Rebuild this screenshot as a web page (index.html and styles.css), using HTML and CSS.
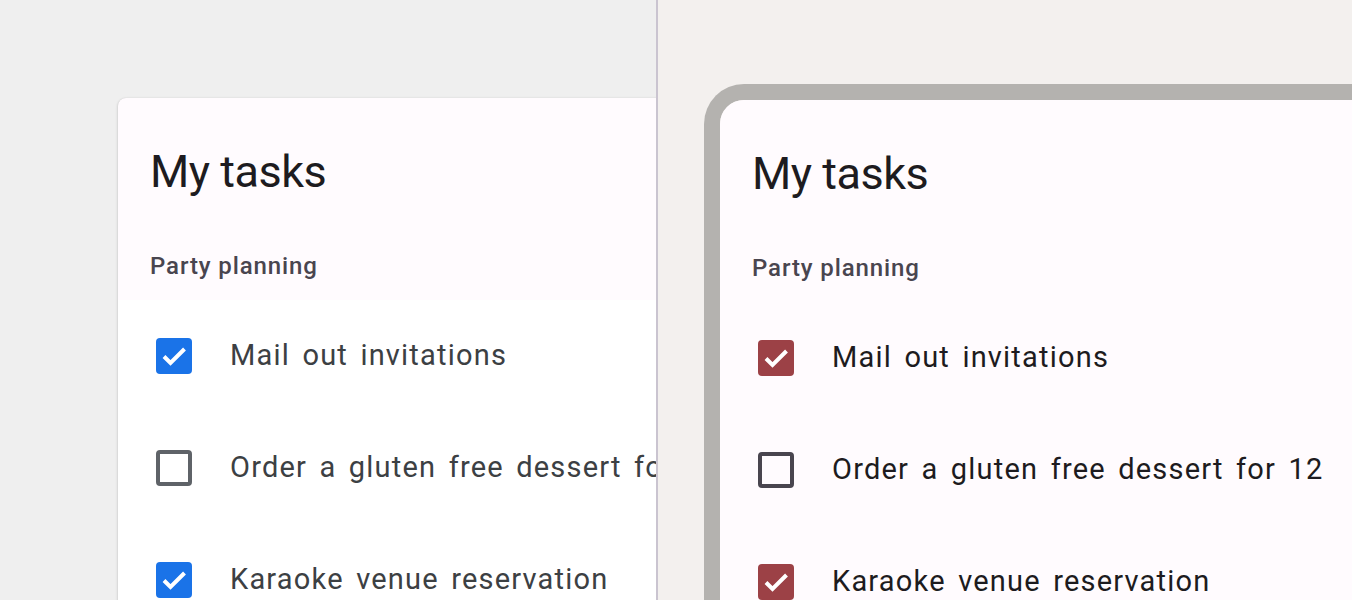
FILE: index.html
```html
<!DOCTYPE html>
<html>
<head>
<meta charset="utf-8">
<link rel="stylesheet" href="styles.css">
</head>
<body>
<div class="stage">
  <section class="pane pane-left">
    <div class="card card-a">
      <header class="card-head">
        <h1 class="title">My tasks</h1>
        <div class="subtitle">Party planning</div>
      </header>
      <ul class="list list-a">
        <li class="row"><span class="box checked"><svg viewBox="0 0 36 36"><polyline points="8,18.5 14.5,25 28.5,11" /></svg></span><span class="label">Mail out invitations</span></li>
        <li class="row"><span class="box"></span><span class="label">Order a gluten free dessert for 12</span></li>
        <li class="row"><span class="box checked"><svg viewBox="0 0 36 36"><polyline points="8,18.5 14.5,25 28.5,11" /></svg></span><span class="label">Karaoke venue reservation</span></li>
      </ul>
    </div>
  </section>
  <div class="divider"></div>
  <section class="pane pane-right">
    <div class="frame">
      <div class="card card-b">
        <header class="card-head">
          <h1 class="title">My tasks</h1>
          <div class="subtitle">Party planning</div>
        </header>
        <ul class="list list-b">
          <li class="row"><span class="box checked"><svg viewBox="0 0 36 36"><polyline points="8,18.5 14.5,25 28.5,11" /></svg></span><span class="label">Mail out invitations</span></li>
          <li class="row"><span class="box"></span><span class="label">Order a gluten free dessert for 12</span></li>
          <li class="row"><span class="box checked"><svg viewBox="0 0 36 36"><polyline points="8,18.5 14.5,25 28.5,11" /></svg></span><span class="label">Karaoke venue reservation</span></li>
        </ul>
      </div>
    </div>
  </section>
</div>
</body>
</html>
```

FILE: styles.css
```css
* { box-sizing: border-box; }
html, body { margin: 0; padding: 0; }
body {
  width: 1352px;
  height: 600px;
  overflow: hidden;
  font-family: Roboto, "Noto Sans", sans-serif;
}
.stage {
  display: flex;
  height: 600px;
}
.pane {
  height: 600px;
  overflow: hidden;
}
.pane-left {
  width: 656px;
  flex: none;
  background: #efefef;
  padding: 98px 0 0 118px;
}
.divider {
  width: 2px;
  flex: none;
  background: #cac4d0;
}
.pane-right {
  flex: 1;
  background: #f3f0ee;
  padding: 84px 0 0 46px;
}
.card {
  width: 760px;
  background: #fffbfe;
}
.card-a {
  border-radius: 8px 0 0 0;
  box-shadow: 0 1px 3px rgba(0,0,0,0.22), 0 0 1px rgba(0,0,0,0.1);
}
.frame {
  width: 760px;
  border: 16px solid #b4b2af;
  border-right: none;
  border-bottom: none;
  border-radius: 40px 0 0 0;
}
.card-b {
  border-radius: 24px 0 0 0;
}
.card-head {
  padding: 48px 0 18px 32px;
}
.title {
  margin: 0;
  font-size: 45px;
  line-height: 52px;
  font-weight: 400;
  letter-spacing: -0.5px;
  color: #1d1b20;
}
.subtitle {
  margin-top: 52px;
  font-size: 24px;
  line-height: 32px;
  font-weight: 500;
  letter-spacing: 0.9px;
  color: #49454f;
}
.list {
  list-style: none;
  margin: 0;
  padding: 0;
}
.list-a { background: #ffffff; }
.row {
  display: flex;
  align-items: center;
  height: 112px;
  padding-left: 38px;
}
.box {
  width: 36px;
  height: 36px;
  flex: none;
  border-radius: 4px;
  border: 4px solid #5f6368;
  display: flex;
}
.list-b .box { border-color: #49454f; }
.box.checked {
  border: none;
  background: #1a73e8;
}
.list-b .box.checked { background: #9c4146; }
.box svg {
  width: 36px;
  height: 36px;
  fill: none;
  stroke: #ffffff;
  stroke-width: 4;
}
.label {
  margin-left: 38px;
  margin-top: -2px;
  font-size: 29px;
  letter-spacing: 1.2px;
  word-spacing: 4px;
  white-space: nowrap;
  color: #3c4043;
}
.list-b .label { color: #1d1b20; }
```
